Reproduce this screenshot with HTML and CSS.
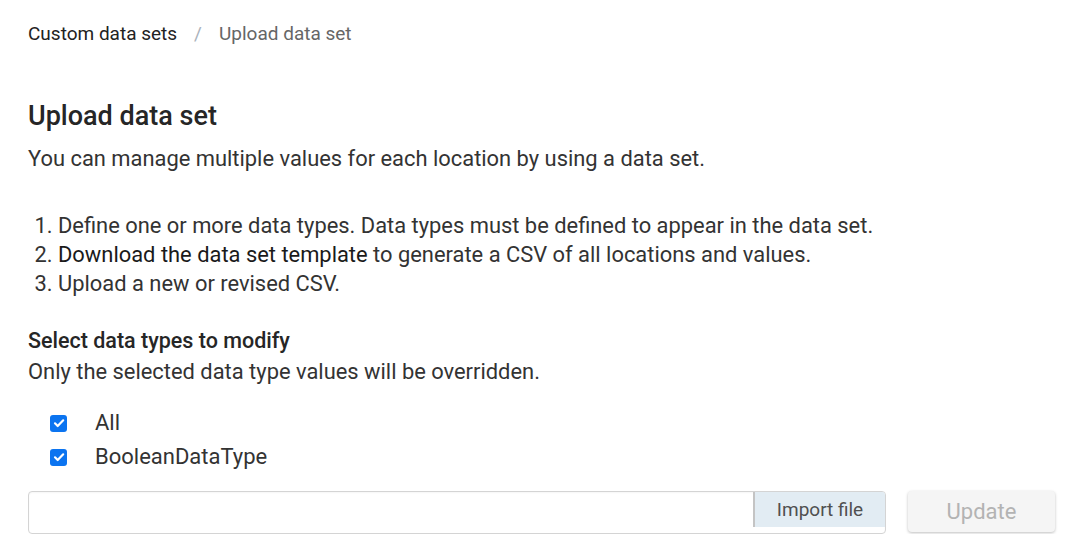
FILE: index.html
```html
<!DOCTYPE html>
<html>
<head>
<meta charset="utf-8">
<link rel="stylesheet" href="styles.css">
</head>
<body>
<div class="page">
  <nav class="crumbs">
    <span class="crumb">Custom data sets</span>
    <span class="sep">/</span>
    <span class="crumb current">Upload data set</span>
  </nav>
  <h1 class="title">Upload data set</h1>
  <p class="lead">You can manage multiple values for each location by using a data set.</p>
  <ol class="steps">
    <li>Define one or more data types. Data types must be defined to appear in the data set.</li>
    <li><span class="link">Download the data set template</span> to generate a CSV of all locations and values.</li>
    <li>Upload a new or revised CSV.</li>
  </ol>
  <h2 class="subtitle">Select data types to modify</h2>
  <p class="note">Only the selected data type values will be overridden.</p>
  <div class="checks">
    <label class="check"><span class="box"><svg viewBox="0 0 16 16" width="16" height="16"><path d="M4 8.3l2.7 2.7L12.2 5.3" fill="none" stroke="#fff" stroke-width="2.2" stroke-linecap="round" stroke-linejoin="round"/></svg></span><span>All</span></label>
    <label class="check"><span class="box"><svg viewBox="0 0 16 16" width="16" height="16"><path d="M4 8.3l2.7 2.7L12.2 5.3" fill="none" stroke="#fff" stroke-width="2.2" stroke-linecap="round" stroke-linejoin="round"/></svg></span><span>BooleanDataType</span></label>
  </div>
  <div class="actions">
    <div class="file">
      <div class="file-name"></div>
      <div class="file-btn">Import file</div>
    </div>
    <button class="update" disabled>Update</button>
  </div>
</div>
</body>
</html>
```

FILE: styles.css
```css
html, body {
  margin: 0;
  padding: 0;
  background: #fff;
}
body {
  font-family: Roboto, "Liberation Sans", sans-serif;
  color: #333;
}
.page {
  padding: 21px 28px 0 28px;
}
.crumbs {
  display: flex;
  align-items: center;
  font-size: 19px;
  line-height: 26px;
  height: 26px;
}
.crumb {
  color: #222;
}
.crumb.current {
  color: #666;
}
.sep {
  color: #aab2bb;
  margin: 0 17px 0 17px;
}
.title {
  margin: 51px 0 0 0;
  font-size: 27px;
  font-weight: 500;
  line-height: 36px;
  color: #262626;
}
.lead {
  margin: 10px 0 0 0;
  font-size: 21.9px;
  line-height: 29px;
  color: #333;
}
.steps {
  margin: 38px 0 0 0;
  padding-left: 30px;
  font-size: 21.9px;
  line-height: 29px;
  color: #333;
}
.steps .link {
  color: #1a1a1a;
}
.subtitle {
  margin: 28px 0 0 0;
  font-size: 21.5px;
  font-weight: 500;
  line-height: 29px;
  color: #262626;
}
.note {
  margin: 2px 0 0 0;
  font-size: 21.9px;
  line-height: 29px;
  color: #333;
}
.checks {
  margin: 23px 0 0 22px;
  display: flex;
  flex-direction: column;
  gap: 6px;
}
.check {
  display: flex;
  align-items: center;
  gap: 28px;
  font-size: 22px;
  line-height: 28px;
  color: #333;
}
.box {
  width: 17px;
  height: 17px;
  border-radius: 3px;
  background: #0b74f0;
  display: flex;
  align-items: center;
  justify-content: center;
}
.box svg {
  display: block;
}
.actions {
  margin-top: 20px;
  display: flex;
  align-items: flex-start;
  gap: 22px;
}
.file {
  width: 858px;
  height: 43px;
  box-sizing: border-box;
  border: 1px solid #d4d4d4;
  border-radius: 4px;
  display: flex;
  align-items: flex-start;
  box-shadow: inset 0 1px 2px rgba(0,0,0,0.04);
}
.file-name {
  flex: 1;
  height: 35px;
  border-right: 2px solid #c4c4c4;
}
.file-btn {
  width: 130px;
  height: 35px;
  background: #e2ecf3;
  color: #505050;
  font-size: 19px;
  line-height: 35px;
  text-align: center;
  border-top-right-radius: 3px;
}
.update {
  width: 147px;
  height: 41px;
  border: none;
  border-radius: 4px;
  background: #f5f5f5;
  color: #b3b3b3;
  font-family: Roboto, "Liberation Sans", sans-serif;
  font-size: 22px;
  box-shadow: 0 1px 3px rgba(0,0,0,0.25);
}
```
